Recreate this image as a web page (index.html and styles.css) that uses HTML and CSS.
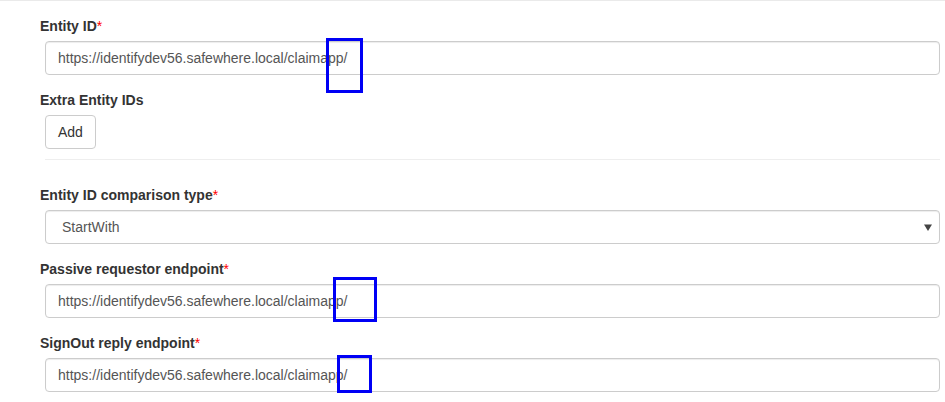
FILE: index.html
```
<!DOCTYPE html>
<html>
<head>
<meta charset="utf-8">
<link rel="stylesheet" href="styles.css">
</head>
<body>
<div class="page">
  <div class="form-group">
    <label class="lbl">Entity ID<span class="req">*</span></label>
    <div class="form-control">https://identifydev56.safewhere.local/claimapp/</div>
  </div>
  <div class="form-group tight">
    <label class="lbl">Extra Entity IDs</label>
    <button class="btn" type="button">Add</button>
  </div>
  <hr class="sep">
  <div class="form-group">
    <label class="lbl">Entity ID comparison type<span class="req">*</span></label>
    <div class="form-control select">
      <span class="sel-text">StartWith</span>
      <svg class="caret" width="8" height="7" viewBox="0 0 8 7"><path d="M0 0.5h8L4 7z" fill="#444"/></svg>
    </div>
  </div>
  <div class="form-group">
    <label class="lbl">Passive requestor endpoint<span class="req">*</span></label>
    <div class="form-control">https://identifydev56.safewhere.local/claimapp/</div>
  </div>
  <div class="form-group">
    <label class="lbl">SignOut reply endpoint<span class="req">*</span></label>
    <div class="form-control">https://identifydev56.safewhere.local/claimapp/</div>
  </div>
</div>
<div class="mark mark1"></div>
<div class="mark mark2"></div>
<div class="mark mark3"></div>
</body>
</html>
```
FILE: styles.css
```
html, body {
  margin: 0;
  padding: 0;
  background: #fff;
}
body {
  font-family: "Liberation Sans", Arial, Helvetica, sans-serif;
  font-size: 14px;
  line-height: 20px;
  color: #333;
  border-top: 1px solid #eaeaea;
  height: 401px;
  overflow: hidden;
  position: relative;
}
.page {
  padding: 15px 5px 0 40px;
}
.form-group {
  display: flex;
  flex-direction: column;
  margin-bottom: 15px;
}
.form-group.tight {
  margin-bottom: 0;
}
.lbl {
  display: block;
  font-weight: bold;
  color: #333;
  margin-bottom: 5px;
  height: 20px;
}
.req {
  color: #f00;
  font-weight: normal;
}
.form-control {
  box-sizing: border-box;
  margin-left: 5px;
  height: 34px;
  padding: 6px 12px;
  border: 1px solid #ccc;
  border-radius: 4px;
  color: #555;
  background: #fff;
  box-shadow: inset 0 1px 1px rgba(0,0,0,0.075);
  white-space: nowrap;
}
.select {
  display: flex;
  align-items: center;
  justify-content: space-between;
  padding: 6px 7px 6px 16px;
}
.caret {
  display: block;
}
.btn {
  align-self: flex-start;
  box-sizing: border-box;
  margin-left: 5px;
  height: 34px;
  padding: 6px 12px;
  font-family: inherit;
  font-size: 14px;
  line-height: 20px;
  color: #333;
  background: #fff;
  border: 1px solid #ccc;
  border-radius: 4px;
}
.sep {
  margin: 10px 0 25px 5px;
  border: 0;
  border-top: 1px solid #eee;
  height: 0;
}
.mark {
  position: absolute;
  border: 3px solid #0000f5;
  box-sizing: border-box;
}
.mark1 { left: 326px; top: 37px; width: 37px; height: 55px; }
.mark2 { left: 333px; top: 276px; width: 44px; height: 45px; }
.mark3 { left: 337px; top: 354px; width: 35px; height: 38px; }
```
